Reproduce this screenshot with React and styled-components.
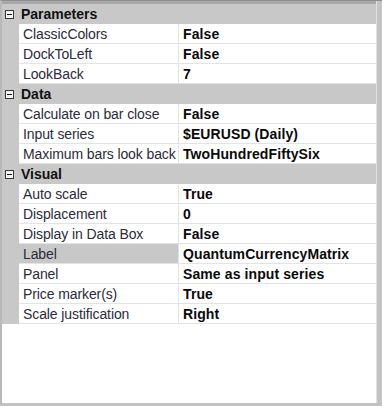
import React from "react";
import styled, { createGlobalStyle } from "styled-components";

const GlobalStyle = createGlobalStyle`
  html, body { margin: 0; padding: 0; background: #ffffff; }
  body { font-family: Tahoma, "DejaVu Sans", "Liberation Sans", sans-serif; }
`;

const Frame = styled.div`
  width: 382px;
  height: 406px;
  box-sizing: border-box;
  border-top: 1px solid #8e8e8e;
  border-left: 2px solid #b9b9b9;
  border-bottom: 3px solid #c2c2c2;
  display: flex;
  background: #ffffff;
`;

const Body = styled.div`
  flex: 1;
  display: flex;
  flex-direction: column;
  border-top: 3px solid #a8a8a8;
  min-width: 0;
`;

const ScrollStrip = styled.div`
  width: 5px;
  border-left: 1px solid #e2e2e2;
  background: #c4c4c4;
`;

const Grid = styled.div`
  display: grid;
  grid-template-columns: 17px 160px 1fr;
`;

const CategoryRow = styled.div`
  grid-column: 1 / -1;
  display: flex;
  align-items: center;
  height: 20px;
  background: #c8c8c8;
`;

const Toggle = styled.span`
  width: 9px;
  height: 9px;
  margin: 0 7px 0 3px;
  box-sizing: border-box;
  border: 1px solid #3a3a3a;
  background: #f2f2f2;
  display: flex;
  align-items: center;
  justify-content: center;
  &::after {
    content: "";
    width: 5px;
    height: 1px;
    background: #1a1a1a;
  }
`;

const CategoryName = styled.span`
  font-family: "Liberation Sans", Arial, sans-serif;
  font-weight: bold;
  font-size: 14px;
  color: #111111;
`;

const Gutter = styled.div`
  background: #c8c8c8;
  height: 20px;
`;

const Cell = styled.div`
  height: 20px;
  box-sizing: border-box;
  border-bottom: 1px solid #e3e3e3;
  display: flex;
  align-items: center;
  white-space: nowrap;
  overflow: hidden;
  font-family: "Liberation Sans", Arial, sans-serif;
  font-size: 14px;
`;

const NameCell = styled(Cell)`
  padding-left: 4px;
  border-right: 1px solid #e3e3e3;
  color: #2b2b3a;
  letter-spacing: -0.1px;
  background: ${(p) => (p.$selected ? "#c8c8c8" : "#ffffff")};
`;

const ValueCell = styled(Cell)`
  padding-left: 4px;
  font-weight: bold;
  color: #0a0a0a;
  letter-spacing: 0.1px;
`;

const categories = [
  {
    name: "Parameters",
    props: [
      ["ClassicColors", "False"],
      ["DockToLeft", "False"],
      ["LookBack", "7"],
    ],
  },
  {
    name: "Data",
    props: [
      ["Calculate on bar close", "False"],
      ["Input series", "$EURUSD (Daily)"],
      ["Maximum bars look back", "TwoHundredFiftySix"],
    ],
  },
  {
    name: "Visual",
    props: [
      ["Auto scale", "True"],
      ["Displacement", "0"],
      ["Display in Data Box", "False"],
      ["Label", "QuantumCurrencyMatrix", true],
      ["Panel", "Same as input series"],
      ["Price marker(s)", "True"],
      ["Scale justification", "Right"],
    ],
  },
];

const App = () => {
  return (
    <Frame>
      <GlobalStyle />
      <Body>
        <Grid>
          {categories.map((cat) => (
            <React.Fragment key={cat.name}>
              <CategoryRow>
                <Toggle />
                <CategoryName>{cat.name}</CategoryName>
              </CategoryRow>
              {cat.props.map(([name, value, selected]) => (
                <React.Fragment key={name}>
                  <Gutter />
                  <NameCell $selected={selected}>{name}</NameCell>
                  <ValueCell>{value}</ValueCell>
                </React.Fragment>
              ))}
            </React.Fragment>
          ))}
        </Grid>
      </Body>
      <ScrollStrip />
    </Frame>
  );
};

export default App;
